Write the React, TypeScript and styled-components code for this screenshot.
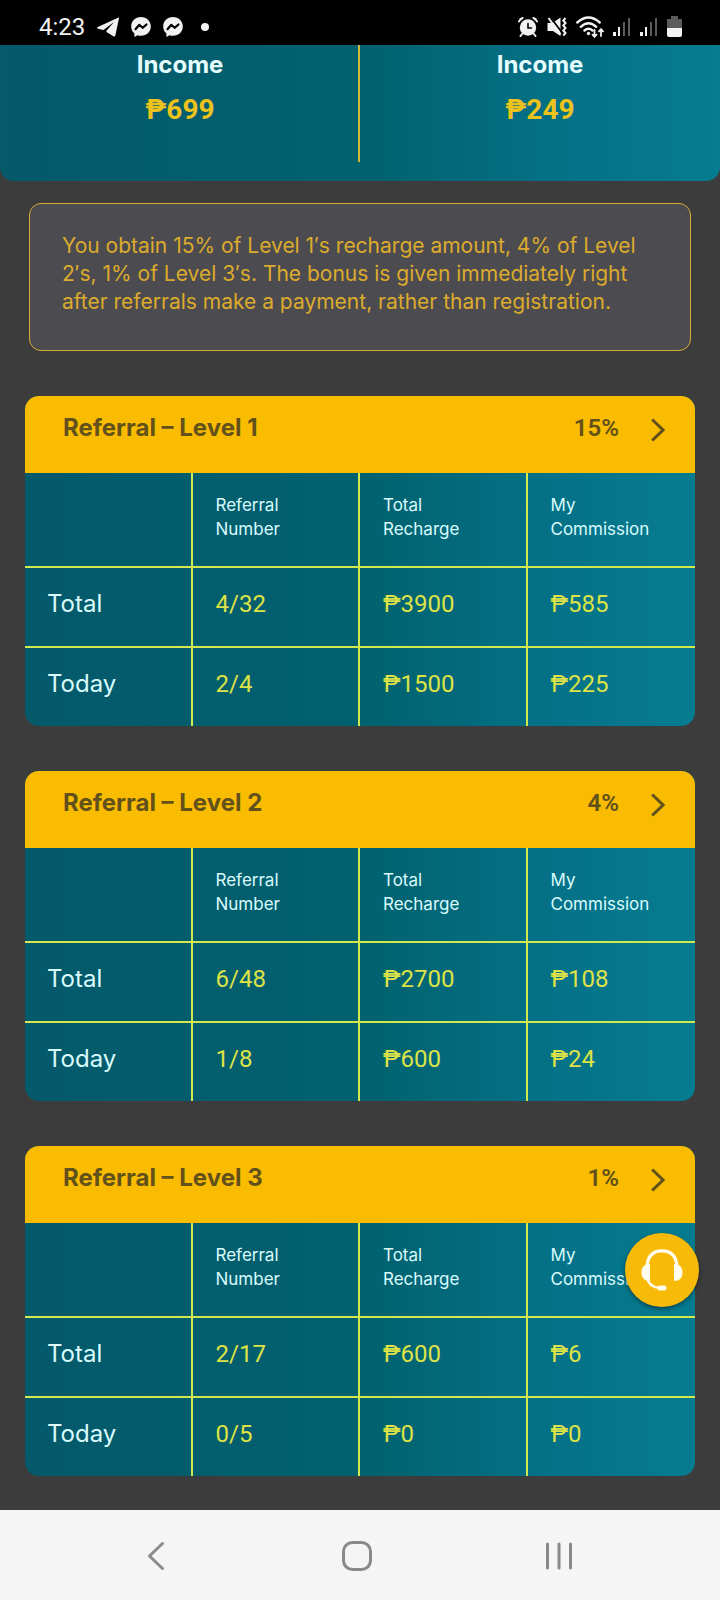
import React from "react";
import styled, { createGlobalStyle } from "styled-components";

const tealGradient =
  "linear-gradient(90deg, #04596a 0%, #02606f 45%, #02626f 52%, #047086 76%, #067c90 100%)";

const GlobalStyle = createGlobalStyle`
  * { box-sizing: border-box; }
  body {
    margin: 0;
    background: #3c3c3c;
    font-family: Inter, "Noto Sans", sans-serif;
  }
  button { font: inherit; border: 0; background: none; padding: 0; cursor: pointer; }
  svg { display: block; }
`;

const Screen = styled.div`
  min-height: 100vh;
  display: flex;
  flex-direction: column;
`;

const StatusBar = styled.header`
  display: flex;
  align-items: center;
  justify-content: space-between;
  height: 45px;
  padding: 8px 38px 0 39px;
  background: #000;
  color: #f2f2f2;
`;

const StatusGroup = styled.div<{ $gap: number }>`
  display: flex;
  align-items: center;
  gap: ${(p) => p.$gap}px;
`;

const Clock = styled.time`
  font: 400 24px/28px Roboto, sans-serif;
`;

const MoreDot = styled.span`
  width: 8px;
  height: 8px;
  margin-left: 6px;
  border-radius: 50%;
  background: #f2f2f2;
`;

const Content = styled.main`
  flex: 1;
  display: flex;
  flex-direction: column;
`;

const Summary = styled.section`
  display: grid;
  grid-template-columns: 1fr 1fr;
  padding-bottom: 19px;
  background: ${tealGradient};
  border-radius: 0 0 14px 14px;
`;

const SummaryItem = styled.div`
  display: flex;
  flex-direction: column;
  align-items: center;
  gap: 15px;
  padding: 6px 0 36px;
  & + & {
    border-left: 2px solid #d2b93c;
    margin-left: -2px;
  }
`;

const SummaryLabel = styled.h2`
  margin: 0;
  color: #e6fdff;
  font-size: 24px;
  line-height: 28px;
  font-weight: 700;
`;

const SummaryAmount = styled.strong`
  color: #ecc21c;
  font: 700 28px/32px Roboto, sans-serif;
`;

const Note = styled.p`
  margin: 22px 29px 45px;
  padding: 28px 32px 34px;
  border: 1px solid #d6aa36;
  border-radius: 12px;
  background: #4c4c50;
  color: #dcab2c;
  font-size: 21px;
  line-height: 28px;
`;

const Levels = styled.div`
  display: flex;
  flex-direction: column;
  gap: 45px;
  padding: 0 25px 34px;
`;

const Card = styled.section`
  overflow: hidden;
  border-radius: 14px;
  background: ${tealGradient};
`;

const CardHeader = styled.button`
  display: flex;
  align-items: flex-end;
  width: 100%;
  padding: 18px 30px 31px 38px;
  background: #fabc00;
  color: #62511a;
  text-align: left;
`;

const CardTitle = styled.span`
  flex: 1;
  font-size: 24px;
  line-height: 28px;
  font-weight: 700;
`;

const Rate = styled.span`
  margin-right: 32px;
  font: 600 24px/28px Roboto, sans-serif;
`;

const Table = styled.table`
  width: 100%;
  table-layout: fixed;
  border-collapse: separate;
  border-spacing: 0;
  text-align: left;

  tr > * {
    border-right: 2px solid #d3e74e;
    border-bottom: 2px solid #d3e74e;
    vertical-align: top;
    font-weight: 400;
  }
  tr > *:last-child { border-right: 0; }
  tbody tr:last-child > * { border-bottom: 0; }
`;

const ColumnHead = styled.th`
  padding: 20px 23px 25px;
  color: #d9fbfd;
  font-size: 17px;
  line-height: 24px;
`;

const EmptyHead = styled.td`
  padding: 0;
`;

const RowHead = styled.th`
  padding: 22px 22px 28px;
  color: #d9fbfd;
  font-size: 24px;
  line-height: 28px;
`;

const Value = styled.td`
  padding: 22px 23px 28px;
  color: #dde346;
  font: 400 24px/28px Roboto, sans-serif;
`;

const SupportButton = styled.button`
  && {
    position: fixed;
    right: 21px;
    bottom: 293px;
    display: grid;
    place-items: center;
    width: 74px;
    height: 74px;
    border-radius: 50%;
    background: #f8ba08;
    box-shadow: 0 2px 4px rgba(0, 0, 0, 0.45);
  }
`;

const NavBar = styled.nav`
  display: grid;
  grid-template-columns: repeat(3, 1fr);
  height: 90px;
  padding: 2px 60px 0 55px;
  background: #f5f5f5;
`;

const NavButton = styled.button`
  display: grid;
  place-items: center;
  color: #8a8a8a;
`;

const Telegram = () => (
  <svg width="22" height="20" viewBox="0 0 22 20" fill="#f2f2f2">
    <path d="M21.600.6.8 10c-.9.4-.8 1.600.1 1.800l5.600 1.200L17 5 9.500 13.800v1.300l6.800 4.100c1 .6 1.900.1 2.100-1L22 1.300c.1-.6 0-.9-.4-.7z" />
  </svg>
);

const Messenger = () => (
  <svg width="20" height="20" viewBox="0 0 20 20">
    <path d="M10 0C4.400 0 .2 4.100.2 9.500c0 3 1.200 5.300 3.200 6.900V20l3.100-1.700c1.100.4 2.300.5 3.500.5 5.600 0 9.800-4 9.800-9.300S15.600 0 10 0z" fill="#f2f2f2" />
    <path d="M4.500 12.200 8.300 7.800l3.300 3 3.900-3.300" fill="none" stroke="#000" strokeWidth="2.200" strokeLinejoin="round" strokeLinecap="round" />
  </svg>
);

const Alarm = () => (
  <svg width="20" height="20" viewBox="0 0 20 20" stroke="#f2f2f2" fill="none" strokeLinecap="round">
    <circle cx="10" cy="10.500" r="8.200" fill="#f2f2f2" stroke="none" />
    <path d="M10 6.500V11h3.500" stroke="#000" strokeWidth="1.600" />
    <path d="M1 4.500Q2 2 4.600 1M19 4.500Q18 2 15.400 1M4.500 16.500 2.500 19M15.500 16.500l2 2.500" strokeWidth="2" />
  </svg>
);

const MutedVibrate = () => (
  <svg width="20" height="20" viewBox="0 0 20 20" fill="none">
    <path d="M.5 6h5L13.500.5v18.500L6 14H.5z" fill="#f2f2f2" />
    <path d="M3.200 0 15 15.500" stroke="#000" strokeWidth="1.800" />
    <path d="M1.500 1 13.500 17.500" stroke="#f2f2f2" strokeWidth="2" />
    <path d="m18.500 1-2.200 2.500 2.200 2.500-2.200 2.500 2.200 2.500-2.200 2.500 2.200 2.500-2.200 2.500" stroke="#f2f2f2" strokeWidth="2" />
  </svg>
);

const Wifi = () => (
  <svg width="28" height="22" viewBox="0 0 28 22" stroke="#f2f2f2" fill="none" strokeWidth="2.400" strokeLinecap="round">
    <path d="M1.300 6.500Q12.500 -3.500 23.700 6.500M4.800 10.800q7.700-7 15.400 0M8.500 14.500q4-3.300 8 0" />
    <circle cx="12.500" cy="17.500" r="1.700" fill="#f2f2f2" stroke="none" />
    <path d="M18.500 14v6.800m-2-2.200 2 2.200 2-2.200M25 20v-6.800m-2 2.200 2-2.200 2 2.200" strokeWidth="1.800" />
  </svg>
);

const Signal = () => (
  <svg width="18" height="20" viewBox="0 0 18 20">
    <rect x="0" y="15" width="3" height="4" fill="#f2f2f2" />
    <rect x="5" y="10" width="2" height="9" fill="#f2f2f2" />
    <rect x="10" y="5" width="2" height="14" fill="#5c5c5c" />
    <rect x="15" y="1" width="2" height="18" fill="#5c5c5c" />
  </svg>
);

const Battery = () => (
  <svg width="15" height="21" viewBox="0 0 15 21">
    <path d="M4 0h7v3h4v9H0V3h4z" fill="#5c5c5c" />
    <path d="M0 12h15v7q0 2-2 2H2q-2 0-2-2z" fill="#f2f2f2" />
  </svg>
);

const Chevron = () => (
  <svg width="14" height="24" viewBox="0 0 14 24" fill="none" stroke="currentColor" strokeWidth="3">
    <path d="M1.200 1.500 12 12 1.200 22.500" />
  </svg>
);

const Headset = () => (
  <svg width="42" height="42" viewBox="0 0 42 42" fill="none" stroke="#fffdf0">
    <path d="M6 17C7 6 13 1.800 21 1.800S35 6 36 17" strokeWidth="3.200" />
    <path d="M9 15v17C3.500 32 .5 29 .5 23.500S3.500 15 9 15zM33 15v17c5.500 0 8.500-3 8.500-8.500S38.500 15 33 15z" fill="#fffdf0" stroke="none" />
    <path d="M6.500 30C8 36 12 38.500 19 39" strokeWidth="2.600" />
    <rect x="16.500" y="36.500" width="9" height="5" rx="2.500" fill="#fffdf0" stroke="none" />
  </svg>
);

const summary = [
  { id: "first", label: "Income", amount: "₱699" },
  { id: "second", label: "Income", amount: "₱249" },
];

const levels = [
  { level: 1, rate: "15%", total: ["4/32", "₱3900", "₱585"], today: ["2/4", "₱1500", "₱225"] },
  { level: 2, rate: "4%", total: ["6/48", "₱2700", "₱108"], today: ["1/8", "₱600", "₱24"] },
  { level: 3, rate: "1%", total: ["2/17", "₱600", "₱6"], today: ["0/5", "₱0", "₱0"] },
];

const columns = [
  ["Referral", "Number"],
  ["Total", "Recharge"],
  ["My", "Commission"],
];

type RowProps = { name: string; values: string[] };

const DataRow = ({ name, values }: RowProps) => (
  <tr>
    <RowHead scope="row">{name}</RowHead>
    {values.map((value, i) => (
      <Value key={i}>{value}</Value>
    ))}
  </tr>
);

type LevelProps = (typeof levels)[number];

const LevelCard = ({ level, rate, total, today }: LevelProps) => (
  <Card>
    <CardHeader type="button">
      <CardTitle>Referral – Level {level}</CardTitle>
      <Rate>{rate}</Rate>
      <Chevron />
    </CardHeader>
    <Table>
      <thead>
        <tr>
          <EmptyHead />
          {columns.map(([first, second]) => (
            <ColumnHead key={second} scope="col">
              {first}
              <br />
              {second}
            </ColumnHead>
          ))}
        </tr>
      </thead>
      <tbody>
        <DataRow name="Total" values={total} />
        <DataRow name="Today" values={today} />
      </tbody>
    </Table>
  </Card>
);

export default function App() {
  return (
    <>
      <GlobalStyle />
      <Screen>
        <StatusBar>
          <StatusGroup $gap={12}>
            <Clock>4:23</Clock>
            <Telegram />
            <Messenger />
            <Messenger />
            <MoreDot />
          </StatusGroup>
          <StatusGroup $gap={9}>
            <Alarm />
            <MutedVibrate />
            <Wifi />
            <Signal />
            <Signal />
            <Battery />
          </StatusGroup>
        </StatusBar>
        <Content>
          <Summary>
            {summary.map((item) => (
              <SummaryItem key={item.id}>
                <SummaryLabel>{item.label}</SummaryLabel>
                <SummaryAmount>{item.amount}</SummaryAmount>
              </SummaryItem>
            ))}
          </Summary>
          <Note>
            You obtain 15% of Level 1′s recharge amount, 4% of Level 2′s, 1% of Level 3′s. The
            bonus is given immediately right after referrals make a payment, rather than
            registration.
          </Note>
          <Levels>
            {levels.map((item) => (
              <LevelCard key={item.level} {...item} />
            ))}
          </Levels>
        </Content>
        <NavBar>
          <NavButton type="button" aria-label="Back">
            <svg width="18" height="30" viewBox="0 0 18 30" fill="none" stroke="currentColor" strokeWidth="3" strokeLinecap="round" strokeLinejoin="round">
              <path d="M15.500 2.500 2.500 15l13 12.500" />
            </svg>
          </NavButton>
          <NavButton type="button" aria-label="Home">
            <svg width="30" height="30" viewBox="0 0 30 30" fill="none" stroke="currentColor" strokeWidth="3">
              <rect x="1.500" y="1.500" width="27" height="27" rx="9" />
            </svg>
          </NavButton>
          <NavButton type="button" aria-label="Recent apps">
            <svg width="28" height="28" viewBox="0 0 28 28" stroke="currentColor" strokeWidth="3" strokeLinecap="round">
              <path d="M2.500 2v24M14 2v24M25.500 2v24" />
            </svg>
          </NavButton>
        </NavBar>
      </Screen>
      <SupportButton type="button" aria-label="Customer support">
        <Headset />
      </SupportButton>
    </>
  );
}
